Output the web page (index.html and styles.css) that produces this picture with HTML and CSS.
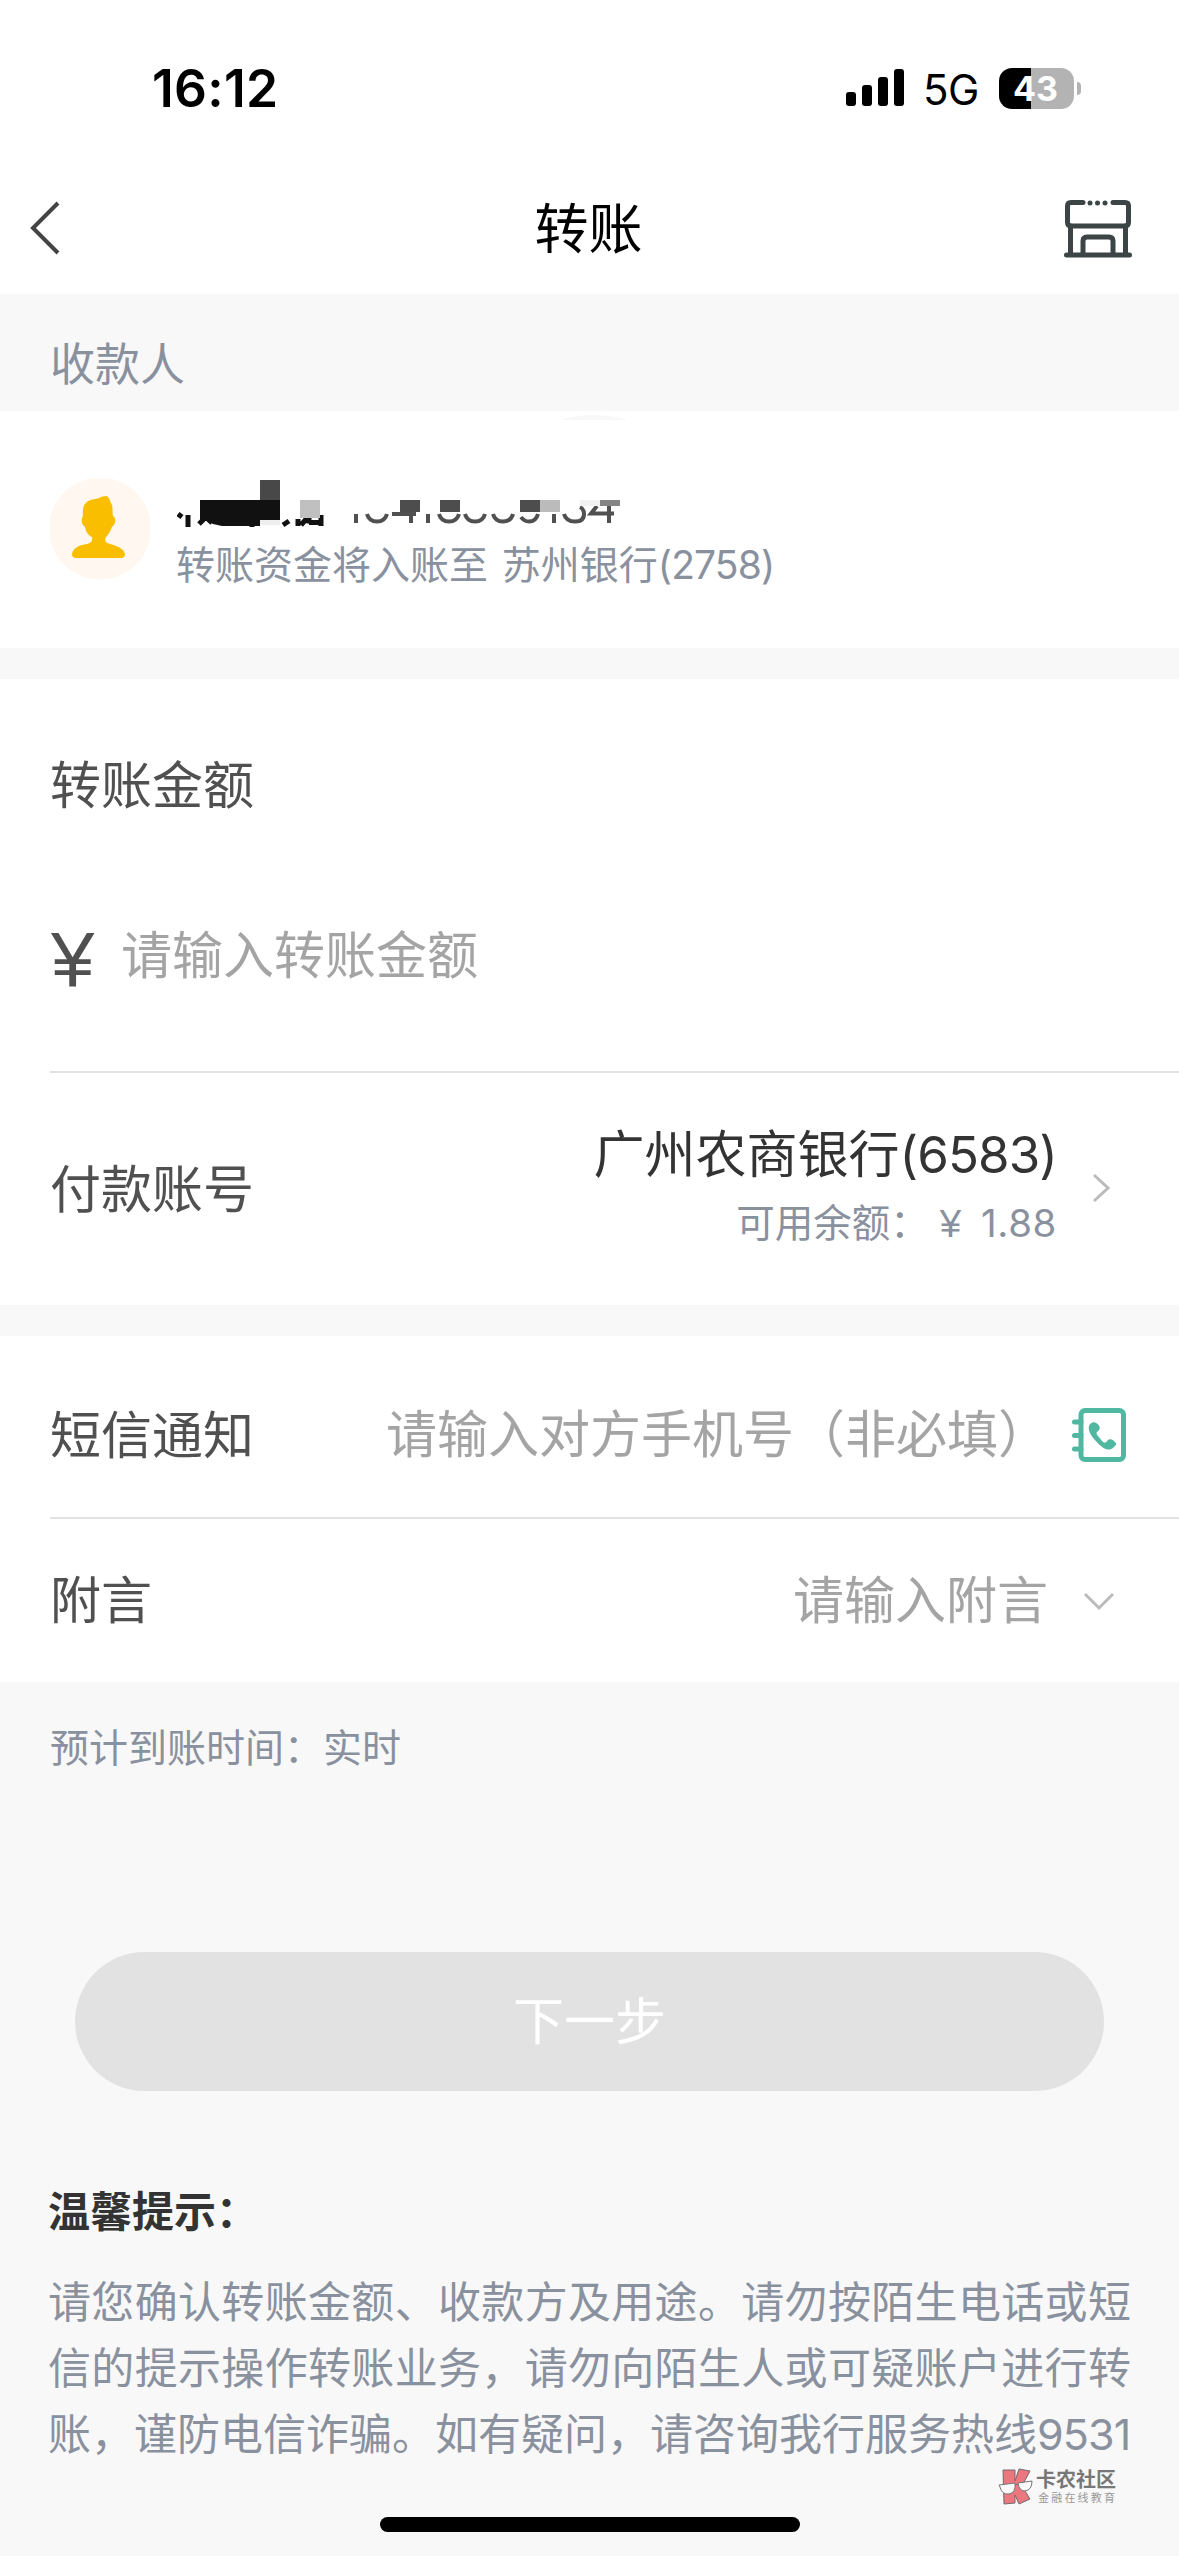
FILE: index.html
```html
<!DOCTYPE html>
<html lang="zh-CN">
<head>
<meta charset="utf-8">
<title>转账</title>
<link rel="stylesheet" href="styles.css">
</head>
<body>
<div class="screen">
  <div class="status">
    <span class="time">16:12</span>
    <div class="status-right">
      <svg class="signal" width="58" height="38" viewBox="0 0 58 38"><rect x="0" y="23" width="10" height="14" rx="3"/><rect x="16" y="16" width="10" height="21" rx="3"/><rect x="32" y="8" width="10" height="29" rx="3"/><rect x="48" y="0" width="10" height="37" rx="3"/></svg>
      <span class="network">5G</span>
      <div class="battery">43</div>
      <div class="battery-tip"></div>
    </div>
  </div>

  <header class="navbar">
    <svg class="back" width="32" height="54" viewBox="0 0 32 54"><path d="M30 2 L5 27 L30 52"/></svg>
    <h1>转账</h1>
    <svg class="store" width="68" height="60" viewBox="0 0 68 60">
      <path d="M19 4.500H7Q3.500 4.500 3.500 8V24Q3.500 28 7 28H61Q64.500 28 64.500 24V8Q64.500 4.500 61 4.500H49"/>
      <path d="M6.500 28V57M61.500 28V57M2.500 57H65.500M19 57V43Q19 39 23 39H45Q49 39 49 43V57"/>
      <g><circle cx="26" cy="5" r="2.500"/><circle cx="33.500" cy="5" r="2.500"/><circle cx="41" cy="5" r="2.500"/></g>
    </svg>
  </header>

  <div class="section-label">收款人</div>

  <section class="payee">
    <svg class="avatar" width="100" height="102" viewBox="0 0 100 102">
      <circle cx="50" cy="49.500" r="51" fill="#fff7f0"/>
      <path fill="#fabe00" d="M45 20C49 20 51 17 56 17C60 18 60 23 62 26C63 30 62 33 63 37C67 40 65 46 62 48C60 53 58 56 56 58C54 62 56 64 60 65C68 67 74 70 75 75Q75 79 71 79H26Q22 79 22 75C23 69 29 66 37 65C41 64 43 62 42 58C38 56 36 53 35 48C31 45 31 40 33 37C32 27 35 21 45 20Z"/>
    </svg>
    <div class="payee-info">
      <svg class="masked" width="450" height="48" viewBox="177 480 450 48">
        <g class="residue-name"><path d="M178 514l4 3M188 515V527M199 524l7-7 6 6M252 521v6M271 521v4M283 525l6-4M298 519v7M308 517l-7 8M309 523.500V517M321 515V526M309 522.500H321"/></g>
        <g fill="#111"><rect x="200" y="500" width="80" height="20"/><path d="M205 520H260V526H222L213 524Z"/></g>
        <rect x="260" y="480" width="20" height="20" fill="#484848"/>
        <rect x="260" y="520" width="20" height="5" fill="#eee"/>
        <rect x="300" y="500" width="20" height="18" fill="#c0c0c0"/>
        <g class="residue-number"><path d="M356 514V523M367 514Q369 521.500 377 521.500Q385 521.500 387 514M392 514H416M411 514V523M428 514V523M439 514Q441 521.500 449 521.500Q457 521.500 459 514M465 514Q467 521.500 475 521.500Q483 521.500 485 514M493 514Q495 521.500 503 521.500Q511 521.500 513 514M521 517Q524 521.500 529 521.500Q536 521.500 538 514M554 514V523M564 514Q566 521.500 575 521.500Q584 521.500 584 514Q584 509 580 507M597 506L591 513.500H614M609 506V523"/></g>
        <g fill="#4d4d4d"><rect x="400" y="500" width="20" height="12"/><rect x="440" y="500" width="20" height="12"/><rect x="520" y="500" width="20" height="12"/></g>
        <rect x="540" y="500" width="20" height="12" fill="#bbb"/>
        <rect x="580" y="500" width="20" height="6" fill="#f2f2f2"/>
        <rect x="600" y="500" width="20" height="6" fill="#858585"/>
      </svg>
      <div class="payee-bank">转账资金将入账至 <span class="payee-bank-name">苏州银行<span class="num">(2758)</span></span></div>
    </div>
    <svg class="hint" width="68" height="5" viewBox="0 0 68 5"><path d="M0 5Q34 -5 68 5Z"/></svg>
  </section>

  <section class="card">
    <h2 class="amount-title">转账金额</h2>
    <div class="amount"><span class="yen">¥</span><span class="placeholder">请输入转账金额</span></div>
    <div class="account">
      <span class="label">付款账号</span>
      <div class="account-value">
        <div class="bank">广州农商银行<span class="num">(6583)</span></div>
        <div class="balance">可用余额：<span class="currency">¥</span><span class="num sum">1.88</span></div>
      </div>
      <svg class="chevron" width="20" height="30" viewBox="0 0 20 30"><path d="M3 2L17 15L3 28"/></svg>
    </div>
  </section>

  <section class="card">
    <div class="row sms">
      <span class="label">短信通知</span>
      <span class="placeholder phone">请输入对方手机号（非必填）</span>
      <svg class="contacts" width="56" height="56" viewBox="0 0 56 56">
        <rect x="9" y="3.500" width="42.500" height="49" rx="4"/>
        <path d="M2.500 15H9M2.500 28.500H9M2.500 42H9"/>
        <path class="handset" d="M17 19C18 16 22 14 24 16C28 18 29 22 26 24C24 25 24 27 26 29L30 34C32 36 34 36 35 34C37 31 41 32 43 35C45 37 44 38 42 40C38 44 33 43 29 39C23 34 15 25 17 19Z"/>
      </svg>
    </div>
    <div class="row remark">
      <span class="label">附言</span>
      <span class="placeholder">请输入附言</span>
      <svg class="chevron down" width="32" height="20" viewBox="0 0 32 20"><path d="M2 2L16 16L30 2"/></svg>
    </div>
  </section>

  <div class="eta">预计到账时间：实时</div>
  <button class="next" disabled>下一步</button>

  <div class="tips">
    <h3>温馨提示：</h3>
    <p>请您确认转账金额、收款方及用途。请勿按陌生电话或短</p>
    <p>信的提示操作转账业务，请勿向陌生人或可疑账户进行转</p>
    <p>账，谨防电信诈骗。如有疑问，请咨询我行服务热线<span class="num">9531</span></p>
  </div>

  <div class="watermark">
    <svg width="36" height="38" viewBox="0 0 36 38">
      <path class="k" d="M5 2H17V13L21 1L32 3L24 18L32 31L21 36L17 27V35L6 36Z"/>
      <path class="lens" d="M1 17L17 15Q18 25 11 26Q4 27 2 19ZM20 15L34 13Q34 22 27 23Q21 23 20 15ZM17 17L20 16"/>
    </svg>
    <div class="watermark-text"><b>卡农社区</b><span>金融在线教育</span></div>
  </div>
  <div class="home-indicator"></div>
</div>
</body>
</html>
```
FILE: styles.css
```css
* { box-sizing: border-box; }
body {
  margin: 0;
  background: #f8f8f8;
  font-family: "Liberation Sans", "Noto Sans CJK SC", sans-serif;
}
h1, h2, h3, p { margin: 0; font-weight: 400; }
svg { display: block; flex: none; fill: none; }
.num { font-family: Inter, sans-serif; letter-spacing: -0.900px; line-height: 1; }
.screen {
  position: relative;
  width: 1179px;
  height: 2556px;
  overflow: hidden;
  display: flex;
  flex-direction: column;
  white-space: nowrap;
}

.status {
  flex: none;
  height: 162px;
  padding: 58px 98px 0 152px;
  background: #fff;
  display: flex;
  justify-content: space-between;
  align-items: flex-start;
  font-family: Inter, sans-serif;
  color: #000;
}
.time { font-size: 51.500px; font-weight: 600; line-height: 61px; letter-spacing: 0.300px; }
.status-right { display: flex; align-items: center; height: 60px; }
.signal { fill: #000; }
.network { width: 60px; margin: 2px 16px 0 19px; font-size: 42px; letter-spacing: -0.500px; }
.battery {
  width: 75px;
  height: 41px;
  padding-right: 2px;
  border-radius: 13px;
  background: linear-gradient(90deg, #000 32px, #b3b3b3 32px);
  color: #fff;
  font-size: 34px;
  font-weight: 700;
  line-height: 41px;
  text-align: center;
}
.battery-tip { width: 4px; height: 13px; margin-left: 3px; border-radius: 0 4px 4px 0; background: #b3b3b3; }

.navbar {
  flex: none;
  height: 132px;
  padding: 0 47px 0 28px;
  background: #fff;
  display: flex;
  justify-content: space-between;
  align-items: center;
}
.back { stroke: #444; stroke-width: 4; }
.navbar h1 { margin: 4px 0 0 53px; font-size: 54px; line-height: 70px; color: #000; }
.store { stroke: #3c4446; stroke-width: 5; stroke-linecap: round; }
.store g { fill: #3c4446; stroke: none; }

.section-label {
  flex: none;
  height: 117px;
  padding: 39px 50px 0;
  font-size: 45px;
  line-height: 66px;
  color: #8a919e;
}

.payee {
  position: relative;
  flex: none;
  height: 237px;
  padding: 68px 50px 0;
  background: #fff;
  display: flex;
  gap: 26px;
}
.payee-info { padding-top: 1px; }
.masked { margin-left: 1px; }
.residue-name { stroke: #111; stroke-width: 5; }
.residue-number { stroke: #505050; stroke-width: 4; }
.payee-bank { margin-top: 11px; font-size: 39px; line-height: 54px; color: #8a919e; }
.payee-bank-name { margin-left: 3px; }
.hint { position: absolute; left: 560px; top: 4px; fill: #f8f8f8; }

.card { flex: none; margin-top: 31px; background: #fff; color: #505050; font-size: 51px; }
.amount-title { height: 178px; padding-top: 73px; font-size: 51px; line-height: 70px; margin-left: 50px; }
.amount {
  height: 216px;
  margin-left: 50px;
  padding-top: 62px;
  border-bottom: 2px solid #e2e2e2;
  display: flex;
  align-items: flex-start;
}
.yen { width: 71px; margin-top: -4px; font-size: 78px; line-height: 90px; text-indent: 1px; }
.placeholder { color: #a4a4a4; line-height: 76px; }
.label { line-height: 76px; }
.account { height: 232px; padding: 0 68px 0 50px; display: flex; align-items: center; }
.account .label { margin-top: 3px; }
.account-value { flex: 1; text-align: right; margin: -1px 34px 0 0; }
.bank { font-size: 51px; line-height: 70px; color: #333; }
.balance { font-size: 38.500px; line-height: 66px; color: #8a919e; }
.currency { margin-left: 11px; }
.sum { margin-left: 20px; letter-spacing: 0.600px; }
.account .chevron { margin-top: -3px; }
.chevron { stroke: #bbb; stroke-width: 3; }

.row { display: flex; align-items: center; }
.sms { height: 183px; margin-left: 50px; padding: 17px 51px 0 0; border-bottom: 2px solid #e2e2e2; }
.row .placeholder { margin-left: auto; }
.sms .placeholder { margin-right: 23px; padding-top: 1px; }
.sms .label { padding-top: 3px; }
.contacts { stroke: #50b7a0; stroke-width: 5; stroke-linecap: round; }
.handset { fill: #50b7a0; stroke: none; }
.remark { height: 163px; padding: 2px 64px 0 50px; }
.remark .placeholder { margin-right: 35px; }

.eta { flex: none; height: 270px; padding: 37px 50px 0; font-size: 39px; line-height: 60px; color: #8a919e; }
.next {
  flex: none;
  height: 139px;
  margin: 0 75px;
  padding: 0 0 8px;
  border: 0;
  border-radius: 70px;
  background: #e2e2e2;
  color: #fff;
  font: inherit;
  font-size: 51px;
}
.tips { padding: 87px 48px 0; font-size: 43px; color: #8a919e; }
.tips h3 { height: 92px; font-size: 42px; font-weight: 700; line-height: 70px; color: #333; }
.tips p { line-height: 66px; letter-spacing: 0.330px; }
.tips p:last-child { letter-spacing: 0; }

.watermark { position: absolute; left: 998px; top: 2468px; display: flex; gap: 2px; }
.k { fill: #ec777f; stroke: #706c6c; stroke-width: 1; }
.lens { fill: #fafafa; stroke: #777; stroke-width: 1; }
.watermark-text { display: flex; flex-direction: column; color: #777; }
.watermark-text b { font-size: 20px; line-height: 24px; }
.watermark-text span { margin-left: 2px; font-size: 11px; line-height: 13px; letter-spacing: 2.200px; color: #999; }
.home-indicator { position: absolute; left: 380px; top: 2517px; width: 420px; height: 15px; border-radius: 8px; background: #000; }
```
